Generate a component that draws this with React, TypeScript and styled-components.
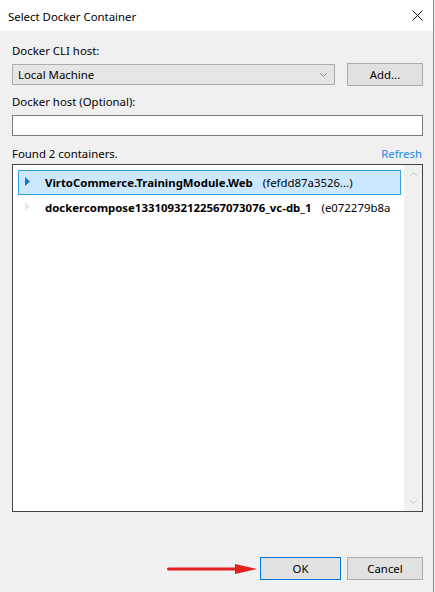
import React from 'react'
import styled, { createGlobalStyle } from 'styled-components'

const GlobalStyle = createGlobalStyle`
  html, body {
    margin: 0;
    padding: 0;
    background: #f0f0f0;
  }
  body {
    font-family: "Noto Sans", "Segoe UI", "Liberation Sans", sans-serif;
    font-size: 11.4px;
    color: #000;
  }
`

const Window = styled.div`
  width: 433px;
  height: 592px;
  border-right: 1px solid #8a8a8a;
  background: #f0f0f0;
  display: flex;
  flex-direction: column;
  overflow: hidden;
`

const TitleBar = styled.div`
  height: 31px;
  background: #fff;
  display: flex;
  align-items: center;
  justify-content: space-between;
  padding: 0 10px 0 8px;
  flex-shrink: 0;
`

const Title = styled.span`
  padding-top: 1px;
`

const Body = styled.div`
  flex: 1;
  display: flex;
  flex-direction: column;
  padding: 12px 10px 12px 12px;
`

const Label = styled.div<{ $top?: number }>`
  height: 16px;
  line-height: 16px;
  margin-top: ${({ $top }) => $top ?? 0}px;
`

const Row = styled.div`
  display: flex;
  align-items: center;
  gap: 12px;
  margin-top: 4px;
`

const Combo = styled.div`
  flex: 1;
  height: 21px;
  box-sizing: border-box;
  border: 1px solid #adadad;
  background: #e5e5e5;
  display: flex;
  align-items: center;
  justify-content: space-between;
  padding: 0 6px 0 5px;
`

const Button = styled.button<{ $default?: boolean }>`
  width: ${({ $default }) => ($default ? 81 : 76)}px;
  height: 23px;
  box-sizing: border-box;
  border: 1px solid ${({ $default }) => ($default ? '#0078d7' : '#adadad')};
  background: #e1e1e1;
  font: inherit;
  color: #000;
  padding: 0;
`

const TextInput = styled.div`
  height: 21px;
  box-sizing: border-box;
  border: 1px solid #7a7a7a;
  background: #fff;
  margin-top: 5px;
`

const ListHeader = styled.div`
  display: flex;
  justify-content: space-between;
  align-items: center;
  height: 16px;
  margin-top: 9px;
`

const Link = styled.span`
  color: #1e88e5;
  margin-right: 1px;
`

const ListBox = styled.div`
  margin-top: 3px;
  height: 348px;
  box-sizing: border-box;
  border: 1px solid #454545;
  background: #fff;
  display: flex;
`

const Items = styled.div`
  flex: 1;
  min-width: 0;
  padding: 5px 3px 0 5px;
  overflow: hidden;
`

const Item = styled.div<{ $selected?: boolean }>`
  height: 25px;
  box-sizing: border-box;
  display: flex;
  align-items: center;
  white-space: nowrap;
  border: 1px solid ${({ $selected }) => ($selected ? '#33a2e5' : 'transparent')};
  background: ${({ $selected }) => ($selected ? '#cce8ff' : 'transparent')};
  padding-left: 6px;
  padding-bottom: 1px;
`

const Caret = styled.svg`
  flex-shrink: 0;
  margin-right: 15px;
  margin-top: -2px;
`

const Name = styled.span`
  font-weight: bold;
  margin-right: 10px;
`

const ScrollBar = styled.div`
  width: 18px;
  background: #f0f0f0;
  display: flex;
  flex-direction: column;
  justify-content: space-between;
  align-items: center;
  padding: 6px 0;
`

const Footer = styled.div`
  margin-top: auto;
  display: flex;
  justify-content: flex-end;
  align-items: center;
  gap: 6px;
`

const Arrow = styled.svg`
  margin-right: -3px;
`

const Chevron = ({ up, color }: { up?: boolean; color: string }) => (
  <svg width="9" height="6" viewBox="0 0 9 6">
    <path
      d={up ? 'M1 5 L4.5 1.5 L8 5' : 'M1 1 L4.5 4.5 L8 1'}
      fill="none"
      stroke={color}
      strokeWidth="1"
    />
  </svg>
)

const containers = [
  { name: 'VirtoCommerce.TrainingModule.Web', id: '(fefdd87a3526...)', selected: true },
  { name: 'dockercompose13310932122567073076_vc-db_1', id: '(e072279b8a', selected: false },
]

export default function App() {
  return (
    <>
      <GlobalStyle />
      <Window>
        <TitleBar>
          <Title>Select Docker Container</Title>
          <svg width="11" height="11" viewBox="0 0 11 11">
            <path d="M0.5 0.5 L10.5 10.5 M10.5 0.5 L0.5 10.5" stroke="#111" strokeWidth="1" />
          </svg>
        </TitleBar>
        <Body>
          <Label>Docker CLI host:</Label>
          <Row>
            <Combo>
              <span>Local Machine</span>
              <Chevron color="#8a8a8a" />
            </Combo>
            <Button>Add...</Button>
          </Row>
          <Label $top={8}>Docker host (Optional):</Label>
          <TextInput />
          <ListHeader>
            <span>Found 2 containers.</span>
            <Link>Refresh</Link>
          </ListHeader>
          <ListBox>
            <Items>
              {containers.map((c) => (
                <Item key={c.name} $selected={c.selected}>
                  <Caret width="5" height="9" viewBox="0 0 5 9">
                    <path d="M0 0 L5 4.5 L0 9 Z" fill={c.selected ? '#1c73c9' : '#e6e6e6'} />
                  </Caret>
                  <Name>{c.name}</Name>
                  <span>{c.id}</span>
                </Item>
              ))}
            </Items>
            <ScrollBar>
              <Chevron up color="#c8c8c8" />
              <Chevron color="#c8c8c8" />
            </ScrollBar>
          </ListBox>
          <Footer>
            <Arrow width="90" height="12" viewBox="0 0 90 12">
              <path d="M1.5 6 L70 6" stroke="#e2211c" strokeWidth="3" strokeLinecap="round" />
              <path d="M68 1 L90 6 L68 11 Z" fill="#e2211c" />
            </Arrow>
            <Button $default>OK</Button>
            <Button>Cancel</Button>
          </Footer>
        </Body>
      </Window>
    </>
  )
}
